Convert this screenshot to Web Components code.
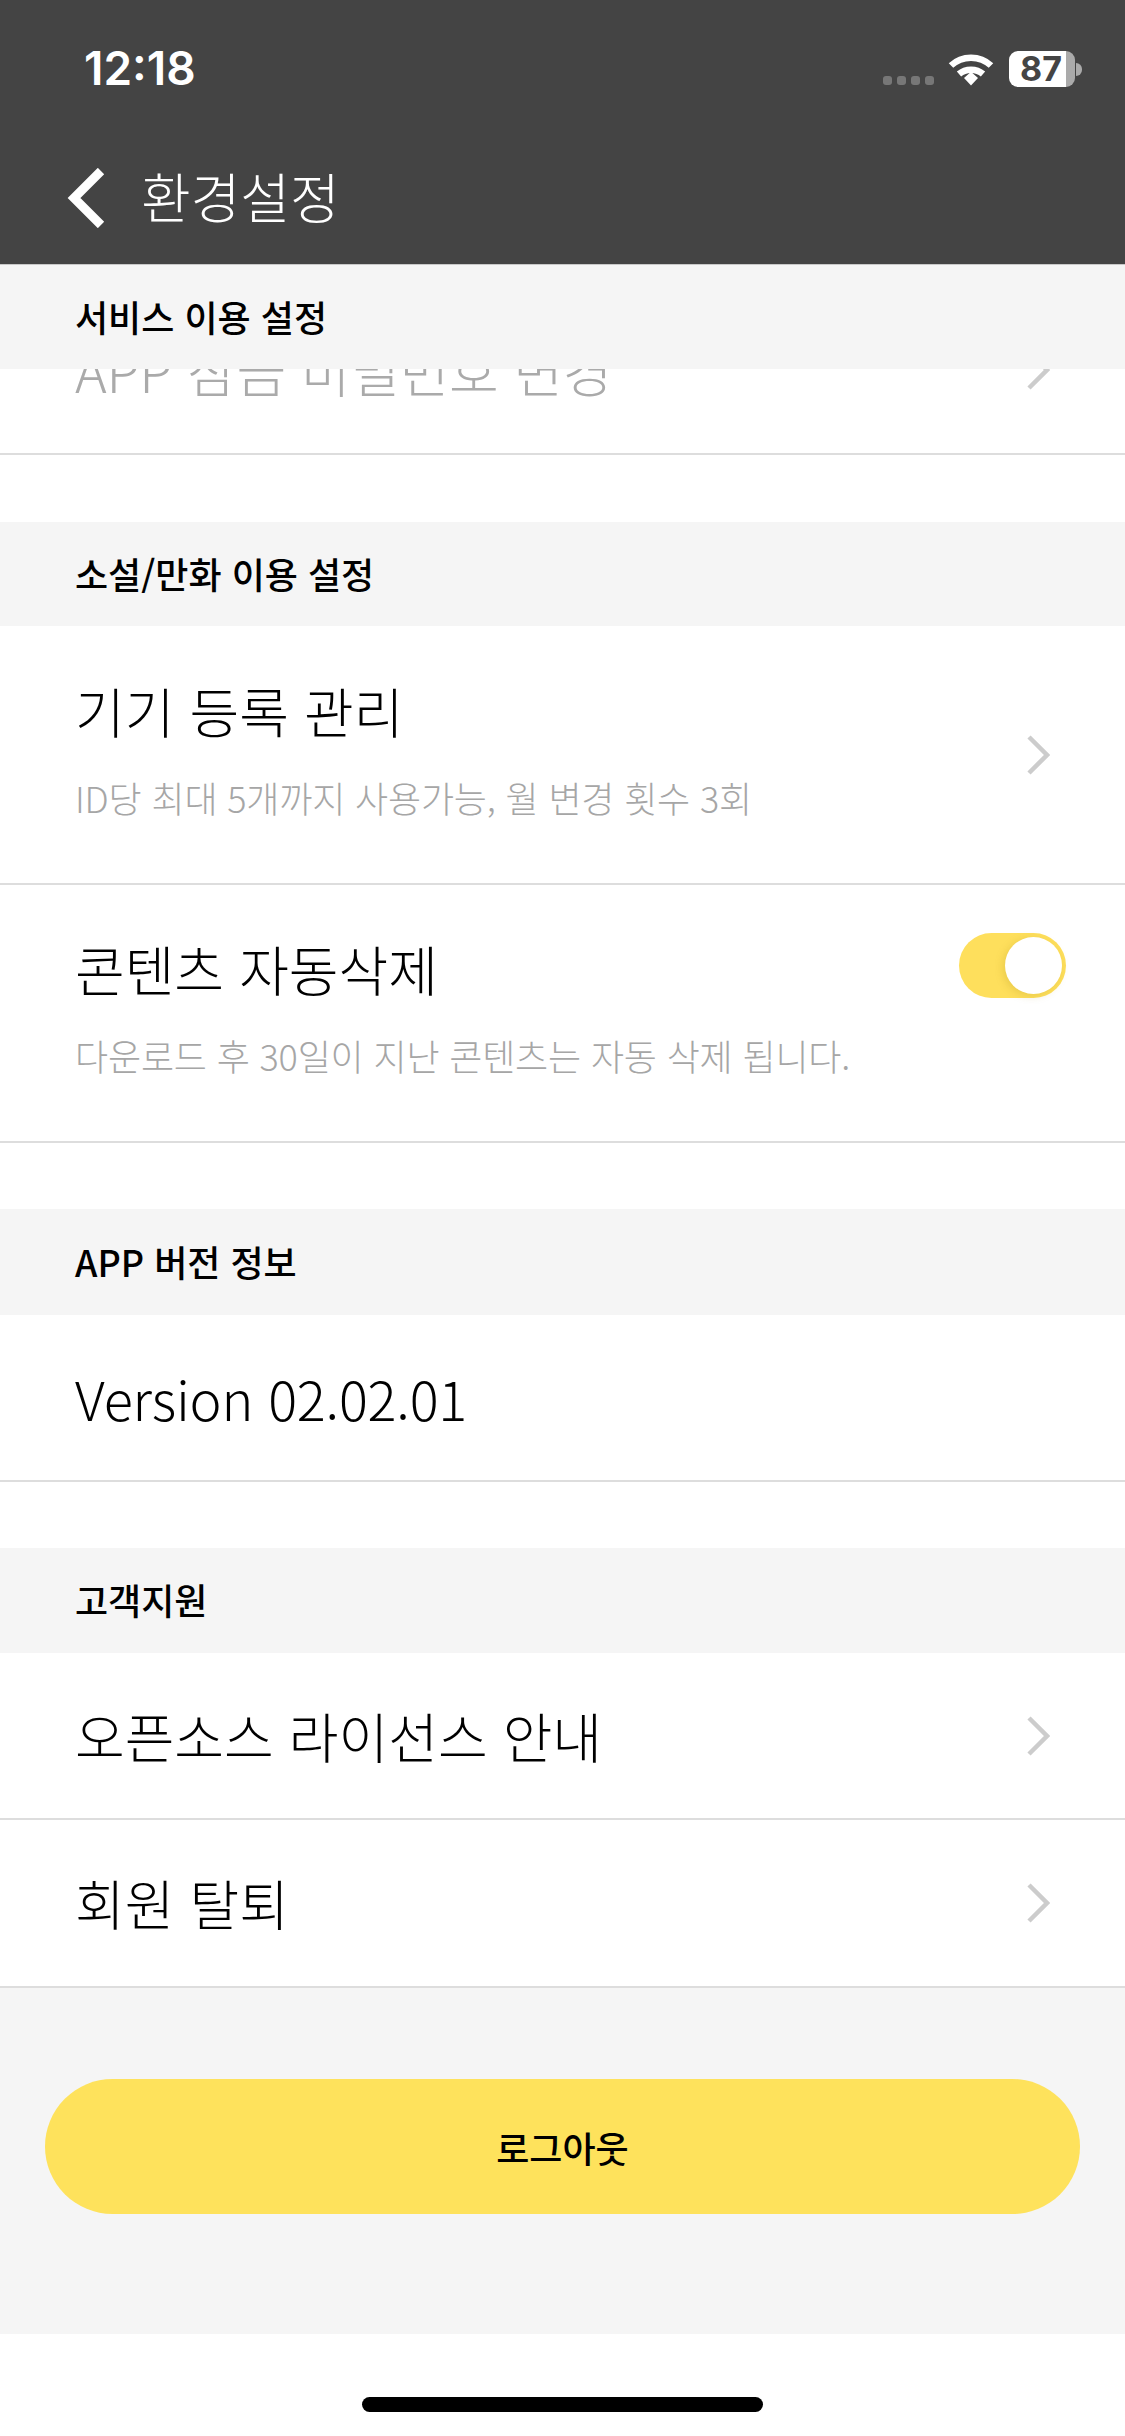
<!DOCTYPE html>
<html lang="ko">
<head>
<meta charset="utf-8">
<title>환경설정</title>
<style>
    html, body {
        margin: 0;
        padding: 0;
        background: #fff;
    }
    body {
        width: 1125px;
        height: 2436px;
        overflow: hidden;
        font-family: "Noto Sans CJK KR", "Noto Sans", sans-serif;
    }
</style>
</head>
<body>
    <status-bar></status-bar>
    <app-bar>환경설정</app-bar>

    <section-head>서비스 이용 설정</section-head>
    <clip-row>
        <setting-row muted chevron><span style="letter-spacing: -0.25px">APP 잠금 비밀번호 변경</span></setting-row>
    </clip-row>
    <section-gap style="height: 67px"></section-gap>

    <section-head>소설/만화 이용 설정</section-head>
    <setting-row style="height: 259px" chevron sub="ID당 최대 5개까지 사용가능, 월 변경 횟수 3회">기기 등록 관리</setting-row>
    <setting-row sub="다운로드 후 30일이 지난 콘텐츠는 자동 삭제 됩니다."><toggle-switch slot="end"></toggle-switch>콘텐츠 자동삭제</setting-row>
    <section-gap></section-gap>

    <section-head style="height: 106px">APP 버전 정보</section-head>
    <setting-row style="height: 167px"><span style="letter-spacing: -0.2px">Version 02.02.01</span></setting-row>
    <section-gap></section-gap>

    <section-head style="height: 105px">고객지원</section-head>
    <setting-row style="height: 167px" chevron>오픈소스 라이선스 안내</setting-row>
    <setting-row chevron>회원 탈퇴</setting-row>

    <logout-panel>로그아웃</logout-panel>
    <home-bar></home-bar>

<script>
class StatusBar extends HTMLElement {
    connectedCallback() {
        this.attachShadow({ mode: 'open' });
        this.shadowRoot.innerHTML = `
            <style>
                :host {
                    display: flex;
                    align-items: flex-start;
                    justify-content: space-between;
                    height: 132px;
                    box-sizing: border-box;
                    padding: 46px 43px 0 84px;
                    background: #444;
                    color: #fff;
                }
                .time {
                    font: 600 46px/44px Inter, "Liberation Sans", sans-serif;
                }
                .icons {
                    display: flex;
                    align-items: flex-start;
                    margin-top: 5px;
                }
                .dots {
                    display: flex;
                    gap: 5px;
                    margin: 25px 14px 0 0;
                }
                .dots i {
                    width: 9px;
                    height: 9px;
                    border-radius: 3px;
                    background: #777;
                }
                svg {
                    display: block;
                    margin: 1px 15px 0 0;
                }
                .battery {
                    display: flex;
                    align-items: center;
                    justify-content: center;
                    width: 66px;
                    height: 36px;
                    box-sizing: border-box;
                    padding-right: 2px;
                    border-radius: 9px;
                    background: linear-gradient(90deg, #fff 57px, #aaa 57px);
                    color: #444;
                    font: 700 34px/36px Inter, "Liberation Sans", sans-serif;
                }
                .nub {
                    width: 6px;
                    height: 13px;
                    margin: 12px 0 0 1px;
                    border-radius: 0 7px 7px 0;
                    background: #aaa;
                }
            </style>
            <span class="time">12:18</span>
            <div class="icons">
                <div class="dots"><i></i><i></i><i></i><i></i></div>
                <svg width="46" height="34" viewBox="0 0 46 34" fill="none" stroke="#fff" stroke-width="6.5">
                    <path d="M3 13.5C14 3 32 3 43 13.5"/>
                    <path d="M11 22C17.500 16.200 28.500 16.200 35 22"/>
                    <path d="M16 26L23 19.800L30 26L23 33.500Z" fill="#fff" stroke="none"/>
                </svg>
                <div class="battery">87</div>
                <div class="nub"></div>
            </div>
        `;
    }
}

class AppBar extends HTMLElement {
    connectedCallback() {
        this.attachShadow({ mode: 'open' });
        this.shadowRoot.innerHTML = `
            <style>
                :host {
                    display: flex;
                    align-items: flex-start;
                    height: 133px;
                    box-sizing: border-box;
                    padding: 36px 0 0 67px;
                    background: #444;
                    border-bottom: 1px solid #c8c8c8;
                    color: #fff;
                    font: 300 54px/62px "Noto Sans CJK KR", sans-serif;
                }
                svg {
                    display: block;
                    margin: 0 36px 0 0;
                }
                .title {
                    margin-top: -3px;
                }
            </style>
            <svg width="38" height="60" viewBox="0 0 38 60" fill="none" stroke="#fff" stroke-width="9">
                <path d="M34 3L7 30L34 57"/>
            </svg>
            <span class="title"><slot></slot></span>
        `;
    }
}

class SectionHead extends HTMLElement {
    connectedCallback() {
        this.attachShadow({ mode: 'open' });
        this.shadowRoot.innerHTML = `
            <style>
                :host {
                    display: flex;
                    align-items: center;
                    height: 104px;
                    box-sizing: border-box;
                    padding: 0 0 3px 75px;
                    background: #f5f5f5;
                    color: #000;
                    font: 500 36px/44px "Noto Sans CJK KR", sans-serif;
                }
            </style>
            <slot></slot>
        `;
    }
}

// row that is scrolled half under the section head
class ClipRow extends HTMLElement {
    connectedCallback() {
        this.attachShadow({ mode: 'open' });
        this.shadowRoot.innerHTML = `
            <style>
                :host {
                    display: block;
                    height: 86px;
                    overflow: hidden;
                }
                .inner {
                    margin-top: -82px;
                }
            </style>
            <div class="inner"><slot></slot></div>
        `;
    }
}

class SettingRow extends HTMLElement {
    connectedCallback() {
        const sub = this.getAttribute('sub');
        const chevron = this.hasAttribute('chevron');
        this.attachShadow({ mode: 'open' });
        this.shadowRoot.innerHTML = `
            <style>
                :host {
                    display: flex;
                    align-items: center;
                    justify-content: space-between;
                    box-sizing: border-box;
                    height: ${sub ? 258 : 168}px;
                    padding: 0 75px;
                    background: #fff;
                    border-bottom: 2px solid #ddd;
                    color: #000;
                }
                :host([muted]) {
                    color: #aaa;
                }
                .text {
                    display: flex;
                    flex-direction: column;
                    margin-top: ${sub ? -13 : 0}px;
                }
                .title {
                    font: 300 54px/66px "Noto Sans CJK KR", sans-serif;
                }
                .sub {
                    margin-top: 31px;
                    color: #a6a6a6;
                    font: 300 36px/44px "Noto Sans CJK KR", sans-serif;
                    letter-spacing: -0.18px;
                }
                svg {
                    display: block;
                }
                ::slotted(toggle-switch) {
                    margin: -96px -16px 0 0;
                }
            </style>
            <div class="text">
                <span class="title"><slot></slot></span>
                ${sub ? `<span class="sub">${sub}</span>` : ''}
            </div>
            <slot name="end"></slot>
            ${chevron ? `
            <svg width="24" height="40" viewBox="0 0 24 40" fill="none" stroke="#ccc" stroke-width="4.5">
                <path d="M3 2L21 20L3 38"/>
            </svg>` : ''}
        `;
    }
}

class ToggleSwitch extends HTMLElement {
    connectedCallback() {
        this.attachShadow({ mode: 'open' });
        this.shadowRoot.innerHTML = `
            <style>
                :host {
                    display: flex;
                    align-items: center;
                    justify-content: flex-end;
                    width: 107px;
                    height: 65px;
                    box-sizing: border-box;
                    padding-right: 4px;
                    border-radius: 33px;
                    background: #fedf5c;
                }
                .knob {
                    width: 57px;
                    height: 57px;
                    border-radius: 50%;
                    background: #fff;
                    box-shadow: -2px 2px 8px rgba(160, 130, 20, 0.22);
                }
            </style>
            <div class="knob"></div>
        `;
    }
}

class SectionGap extends HTMLElement {
    connectedCallback() {
        this.attachShadow({ mode: 'open' });
        this.shadowRoot.innerHTML = `
            <style>
                :host {
                    display: block;
                    height: 66px;
                    background: #fff;
                }
            </style>
        `;
    }
}

class LogoutPanel extends HTMLElement {
    connectedCallback() {
        this.attachShadow({ mode: 'open' });
        this.shadowRoot.innerHTML = `
            <style>
                :host {
                    display: block;
                    height: 346px;
                    box-sizing: border-box;
                    padding: 91px 45px 0;
                    background: #f5f5f5;
                }
                button {
                    display: block;
                    width: 100%;
                    height: 135px;
                    padding: 0;
                    border: 0;
                    border-radius: 68px;
                    background: #fee25c;
                    color: #000;
                    font: 500 36px/44px "Noto Sans CJK KR", sans-serif;
                }
            </style>
            <button type="button"><slot></slot></button>
        `;
    }
}

class HomeBar extends HTMLElement {
    connectedCallback() {
        this.attachShadow({ mode: 'open' });
        this.shadowRoot.innerHTML = `
            <style>
                :host {
                    display: flex;
                    justify-content: center;
                    height: 102px;
                    box-sizing: border-box;
                    padding-top: 63px;
                    background: #fff;
                }
                div {
                    width: 401px;
                    height: 15px;
                    border-radius: 8px;
                    background: #000;
                }
            </style>
            <div></div>
        `;
    }
}

customElements.define('status-bar', StatusBar);
customElements.define('app-bar', AppBar);
customElements.define('section-head', SectionHead);
customElements.define('clip-row', ClipRow);
customElements.define('setting-row', SettingRow);
customElements.define('toggle-switch', ToggleSwitch);
customElements.define('section-gap', SectionGap);
customElements.define('logout-panel', LogoutPanel);
customElements.define('home-bar', HomeBar);
</script>
</body>
</html>
